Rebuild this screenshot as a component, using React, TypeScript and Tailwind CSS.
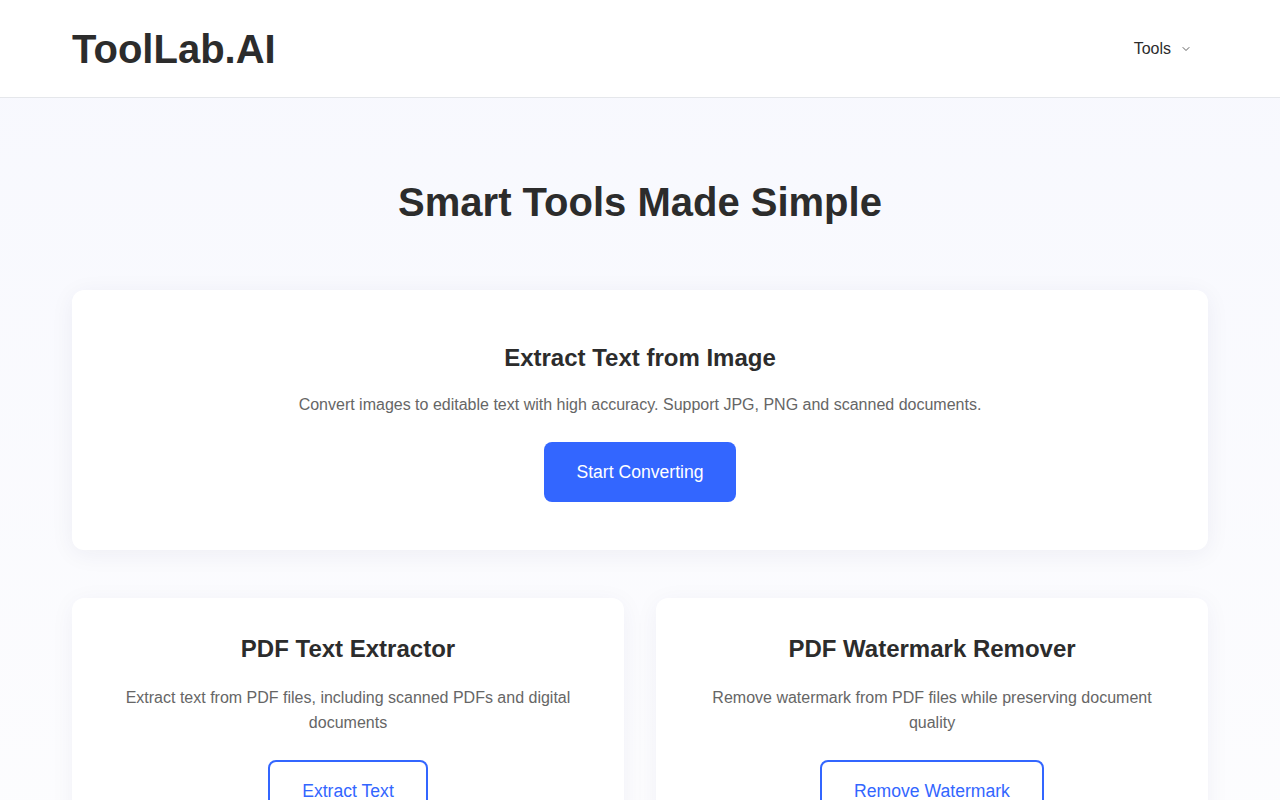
import { ChevronDown } from 'lucide-react';

// ToolLab.AI landing — header, hero title, featured tool, secondary tools grid.

type Tool = {
  title: string;
  description: string;
  action: string;
};

const secondaryTools: Tool[] = [
  {
    title: 'PDF Text Extractor',
    description: 'Extract text from PDF files, including scanned PDFs and digital documents',
    action: 'Extract Text',
  },
  {
    title: 'PDF Watermark Remover',
    description: 'Remove watermark from PDF files while preserving document quality',
    action: 'Remove Watermark',
  },
];

function Header() {
  return (
    <header className="h-[98px] bg-white border-b border-[#e5e7eb]">
      <div className="mx-auto max-w-[1136px] h-full flex items-center justify-between">
        <a href="#" className="text-[40px] font-bold leading-none text-[#2c2c2c]">
          ToolLab.AI
        </a>
        <button type="button" className="flex items-center gap-[9px] pl-4 pr-[16px] text-base text-[#2c2c2c]">
          Tools
          <ChevronDown size={12} strokeWidth={1.5} className="mt-[1px]" />
        </button>
      </div>
    </header>
  );
}

function FeaturedCard() {
  return (
    <section className="bg-white rounded-xl shadow-[0_4px_24px_rgba(30,40,90,0.06)] px-12 pt-[50px] pb-12 text-center">
      <h2 className="text-2xl font-bold leading-[36px] text-[#2c2c2c]">Extract Text from Image</h2>
      <p className="mt-4 text-base leading-[25px] text-[#666]">
        Convert images to editable text with high accuracy. Support JPG, PNG and scanned documents.
      </p>
      <button
        type="button"
        className="mt-[25px] h-[60px] w-[192px] rounded-lg bg-[#3366ff] text-[17.6px] text-white"
      >
        Start Converting
      </button>
    </section>
  );
}

function ToolCard({ tool }: { tool: Tool }) {
  return (
    <section className="bg-white rounded-xl shadow-[0_4px_24px_rgba(30,40,90,0.05)] px-8 pt-[33px] pb-10 text-center">
      <h3 className="text-2xl font-bold leading-[36px] text-[#2c2c2c]">{tool.title}</h3>
      <p className="mt-[18px] text-base leading-[25px] text-[#666]">{tool.description}</p>
      <button
        type="button"
        className="mt-[25px] h-[62px] px-8 rounded-lg border-2 border-[#3366ff] bg-white text-[17.6px] text-[#3366ff]"
      >
        {tool.action}
      </button>
    </section>
  );
}

export default function App() {
  return (
    <div className="min-h-screen bg-gradient-to-b from-[#f7f8fe] to-[#fdfdfe] font-['Liberation_Sans',Arial,sans-serif]">
      <Header />
      <main className="mx-auto max-w-[1136px] pb-20">
        <h1 className="pt-[80px] text-[40px] font-bold leading-[48px] text-center text-[#2c2c2c]">
          Smart Tools Made Simple
        </h1>
        <div className="mt-[64px]">
          <FeaturedCard />
        </div>
        <div className="mt-12 grid grid-cols-2 gap-8">
          {secondaryTools.map((tool) => (
            <ToolCard key={tool.title} tool={tool} />
          ))}
        </div>
      </main>
    </div>
  );
}
